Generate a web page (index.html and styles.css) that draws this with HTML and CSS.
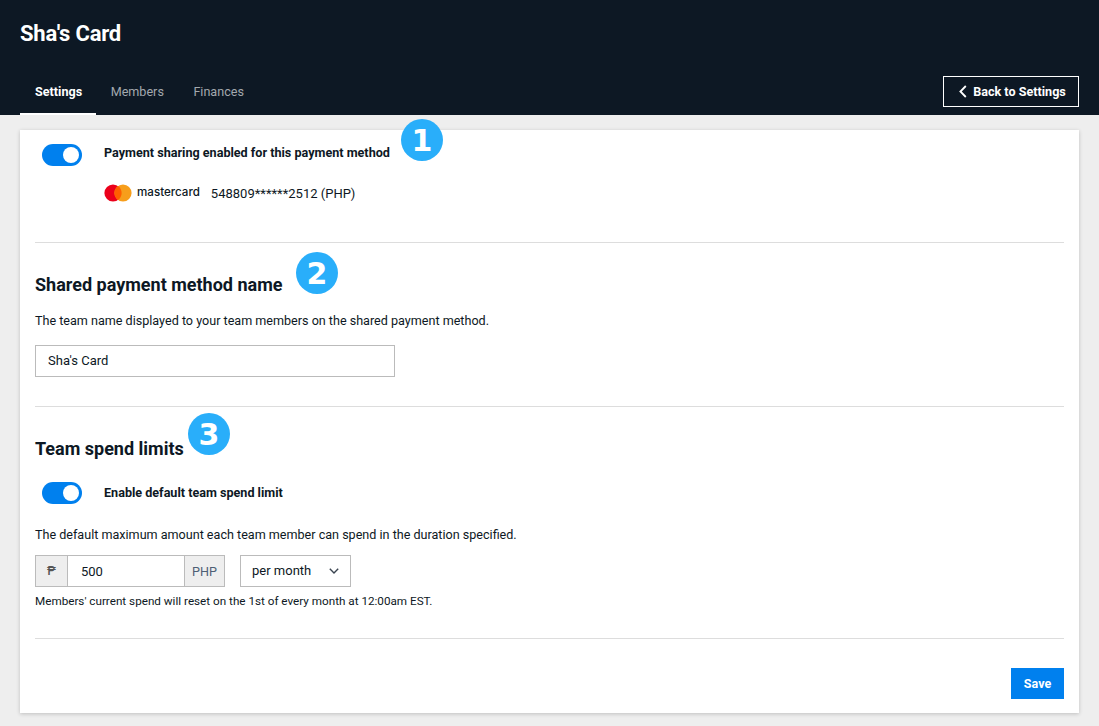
FILE: index.html
```html
<!DOCTYPE html>
<html lang="en">
  <head>
    <meta charset="UTF-8" />
    <title>Sha's Card</title>
    <link rel="stylesheet" href="styles.css">
  </head>
  <body>
    <header class="topbar">
      <h1 class="titel">Sha's Card</h1>
      <div class="topbar-row">
        <nav class="tabs">
          <a class="tab valgt">Settings</a>
          <a class="tab">Members</a>
          <a class="tab">Finances</a>
        </nav>
        <button class="back-btn">
          <svg width="8" height="13" viewBox="0 0 8 13"><path d="M6.8 1 1.4 6.5l5.4 5.5" fill="none" stroke="#fff" stroke-width="1.8"/></svg>
          Back to Settings
        </button>
      </div>
    </header>

    <main class="card">
      <section class="block block-first">
        <div class="switch-row">
          <span class="switch"></span>
          <strong class="switch-label">Payment sharing enabled for this payment method</strong>
        </div>
        <div class="method">
          <svg class="mc" width="28" height="18" viewBox="0 0 28 18">
            <circle cx="9" cy="9" r="8.6" fill="#eb001b"/>
            <circle cx="19" cy="9" r="8.6" fill="#f79e1b"/>
            <path d="M14 2a8.6 8.6 0 0 1 0 14 8.6 8.6 0 0 1 0-14z" fill="#ff5f00"/>
          </svg>
          <span class="mc-name">mastercard</span>
          <span class="card-no">548809******2512 (PHP)</span>
        </div>
        <span class="nummer nummer-1">1</span>
      </section>

      <section class="block block-name">
        <h2>Shared payment method name</h2>
        <p class="besk">The team name displayed to your team members on the shared payment method.</p>
        <input class="name-input" type="text" value="Sha's Card" />
        <span class="nummer nummer-2">2</span>
      </section>

      <section class="block block-limit">
        <h2>Team spend limits</h2>
        <div class="switch-row switch-row-2">
          <span class="switch"></span>
          <strong class="switch-label">Enable default team spend limit</strong>
        </div>
        <p class="besk">The default maximum amount each team member can spend in the duration specified.</p>
        <div class="limit-row">
          <div class="amount">
            <span class="addon addon-peso">₱</span>
            <span class="amount-value">500</span>
            <span class="addon addon-php">PHP</span>
          </div>
          <div class="period">
            per month
            <svg width="10" height="6" viewBox="0 0 10 6"><path d="M.8.8 5 5l4.2-4.2" fill="none" stroke="#3a4450" stroke-width="1.4"/></svg>
          </div>
        </div>
        <p class="hint">Members' current spend will reset on the 1st of every month at 12:00am EST.</p>
        <span class="nummer nummer-3">3</span>
      </section>

      <footer class="card-foot">
        <button class="save">Save</button>
      </footer>
    </main>
  </body>
</html>
```

FILE: styles.css
```css
* {
  box-sizing: border-box;
}

body {
  margin: 0;
  height: 726px;
  overflow: hidden;
  background-color: #eeeeee;
  color: #0d1824;
  font-family: Roboto, "Liberation Sans", sans-serif;
  font-size: 13px;
}

.topbar {
  height: 115px;
  padding: 0 20px;
  background-color: #0d1824;
  display: flex;
  flex-direction: column;
  justify-content: space-between;
}

.titel {
  margin: 20px 0 0;
  font-size: 22px;
  line-height: 28px;
  font-weight: 700;
  letter-spacing: -0.2px;
  color: #ffffff;
}

.topbar-row {
  display: flex;
  justify-content: space-between;
  align-items: flex-start;
}

.tabs {
  display: flex;
}

.tab {
  height: 48px;
  padding: 0 15px 0 14.5px;
  line-height: 50px;
  font-size: 12.6px;
  color: #a3a8ae;
}

.valgt {
  padding: 0 14px 0 15px;
  color: #ffffff;
  font-weight: 700;
  border-bottom: 2px solid #ffffff;
}

.back-btn {
  width: 136px;
  height: 31px;
  margin-top: 9px;
  display: flex;
  align-items: center;
  justify-content: center;
  gap: 6px;
  padding: 0 0 0 3px;
  background: none;
  border: 1px solid #ffffff;
  color: #ffffff;
  font-family: inherit;
  font-size: 12.6px;
  font-weight: 700;
}

.card {
  width: 1059px;
  height: 583px;
  margin: 15px 0 0 20px;
  padding: 0 15px;
  background-color: #ffffff;
  box-shadow: 0 1px 4px rgba(0, 0, 0, 0.2);
}

.block {
  position: relative;
  border-bottom: 1px solid #dddddd;
}

.block-first {
  height: 113px;
  padding-top: 14px;
}

.block-name {
  height: 164px;
  padding-top: 31px;
}

.block-limit {
  height: 232px;
  padding-top: 31px;
}

h2 {
  margin: 0;
  font-size: 18px;
  line-height: 21px;
  font-weight: 700;
}

.switch-row {
  display: flex;
  align-items: flex-start;
  padding-left: 7px;
  gap: 22px;
}

.switch-row-2 {
  margin-top: 23px;
}

.switch-row-2 .switch-label {
  padding-top: 2px;
}

.switch {
  position: relative;
  width: 40px;
  height: 22px;
  border-radius: 11px;
  background-color: #0080ee;
}

.switch::after {
  content: "";
  position: absolute;
  top: 3px;
  right: 3px;
  width: 16px;
  height: 16px;
  border-radius: 50%;
  background-color: #ffffff;
}

.switch-label {
  font-size: 12.6px;
  line-height: 17px;
  font-weight: 700;
}

.method {
  display: flex;
  align-items: center;
  margin: 17px 0 0 69px;
  height: 20px;
}

.mc-name {
  margin: -2px 0 0 5px;
  font-family: Inter, sans-serif;
  font-size: 11.6px;
  font-weight: 500;
}

.card-no {
  margin-left: 11px;
}

.besk {
  margin: 18px 0 16px;
  font-size: 12.58px;
  line-height: 16px;
}

.block-limit .besk {
  margin: 23px 0 12px;
}

.name-input {
  display: block;
  width: 360px;
  height: 32px;
  padding: 0 12px 2px;
  border: 1px solid #bbbbbb;
  color: #0d1824;
  font-family: inherit;
  font-size: 13px;
}

.limit-row {
  display: flex;
  gap: 15px;
}

.amount {
  display: flex;
  width: 190px;
  height: 32px;
  border: 1px solid #bbbbbb;
}

.addon {
  display: flex;
  align-items: center;
  justify-content: center;
  background-color: #eeeeee;
}

.addon-peso {
  width: 32px;
  border-right: 1px solid #bbbbbb;
  color: #555555;
  font-size: 12px;
  font-weight: 500;
}

.addon-php {
  width: 40px;
  border-left: 1px solid #bbbbbb;
  color: #4d5f75;
  font-size: 12.6px;
}

.amount-value {
  flex: 1;
  padding-left: 13px;
  line-height: 31px;
}

.period {
  width: 111px;
  height: 32px;
  padding: 0 11px 1px;
  display: flex;
  align-items: center;
  justify-content: space-between;
  border: 1px solid #bbbbbb;
}

.hint {
  margin: 7px 0 0;
  font-size: 11.7px;
  line-height: 15px;
}

.card-foot {
  display: flex;
  justify-content: flex-end;
  padding-top: 29px;
}

.save {
  width: 53px;
  height: 31px;
  padding: 0;
  border: 0;
  background-color: #0080ee;
  color: #ffffff;
  font-family: inherit;
  font-size: 12.5px;
  font-weight: 700;
}

/* nummer-cirkler lagt oven paa skaermbilledet */
.nummer {
  position: absolute;
  width: 42px;
  height: 42px;
  border-radius: 50%;
  background-color: #29aefa;
  color: #ffffff;
  font-family: "DejaVu Sans", sans-serif;
  font-size: 30px;
  font-weight: 700;
  line-height: 43px;
  text-align: center;
}

.nummer-1 {
  top: -11px;
  left: 366px;
}

.nummer-2 {
  top: 9px;
  left: 261px;
}

.nummer-3 {
  top: 6px;
  left: 153px;
}
```
